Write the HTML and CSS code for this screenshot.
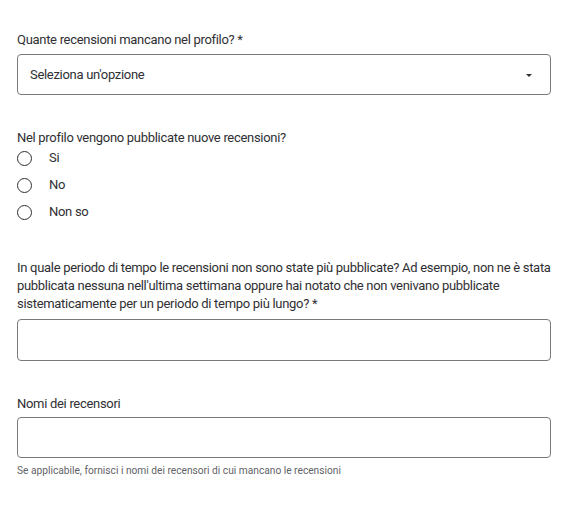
FILE: index.html
```html
<!DOCTYPE html>
<html lang="it">
<head>
<meta charset="utf-8">
<link rel="stylesheet" href="styles.css">
</head>
<body>
<form class="form">
  <div class="field field-select">
    <label class="label">Quante recensioni mancano nel profilo? *</label>
    <div class="box select">
      <span class="select-text">Seleziona un'opzione</span>
      <span class="caret"></span>
    </div>
  </div>

  <div class="field field-radio">
    <div class="label">Nel profilo vengono pubblicate nuove recensioni?</div>
    <div class="radios">
      <div class="radio"><span class="circle"></span><span class="radio-text">Si</span></div>
      <div class="radio"><span class="circle"></span><span class="radio-text">No</span></div>
      <div class="radio"><span class="circle"></span><span class="radio-text">Non so</span></div>
    </div>
  </div>

  <div class="field field-text">
    <label class="label">In quale periodo di tempo le recensioni non sono state più pubblicate? Ad esempio, non ne è stata pubblicata nessuna nell'ultima settimana oppure hai notato che non venivano pubblicate sistematicamente per un periodo di tempo più lungo? *</label>
    <div class="box input"></div>
  </div>

  <div class="field field-names">
    <label class="label">Nomi dei recensori</label>
    <div class="box input"></div>
    <div class="help">Se applicabile, fornisci i nomi dei recensori di cui mancano le recensioni</div>
  </div>
</form>
</body>
</html>
```

FILE: styles.css
```css
html, body {
  margin: 0;
  padding: 0;
  background: #ffffff;
}
body {
  font-family: Roboto, "Liberation Sans", Arial, sans-serif;
  color: #2f3033;
  font-size: 13px;
  letter-spacing: -0.3px;
}
.form {
  width: 534px;
  padding: 31px 0 0 17px;
  display: flex;
  flex-direction: column;
}
.label {
  display: block;
  line-height: 18px;
  font-size: 13px;
}
.box {
  box-sizing: border-box;
  border: 1px solid #7a7a7a;
  border-radius: 4px;
  height: 42px;
}
.field-select .box {
  margin-top: 5px;
  height: 41px;
}
.select {
  display: flex;
  align-items: center;
  justify-content: space-between;
  padding: 0 18px 0 12px;
}
.select-text {
  font-size: 13px;
}
.caret {
  width: 0;
  height: 0;
  border-left: 3.5px solid transparent;
  border-right: 3.5px solid transparent;
  border-top: 3.5px solid #333333;
  margin-top: 1px;
}
.field-radio {
  margin-top: 34px;
}
.radios {
  display: flex;
  flex-direction: column;
  gap: 9px;
  margin-top: 2px;
}
.radio {
  display: flex;
  align-items: center;
  height: 18px;
}
.circle {
  box-sizing: border-box;
  width: 15px;
  height: 15px;
  border: 1.5px solid #2f3033;
  border-radius: 50%;
  margin-right: 17px;
}
.radio-text {
  font-size: 13px;
  line-height: 18px;
}
.field-text {
  margin-top: 38px;
}
.field-text .box {
  margin-top: 6px;
}
.field-names {
  margin-top: 34px;
}
.field-names .box {
  margin-top: 4px;
  height: 41px;
}
.help {
  margin-top: 7px;
  font-size: 10.2px;
  letter-spacing: 0;
  line-height: 12px;
  color: #5f6368;
}
```
